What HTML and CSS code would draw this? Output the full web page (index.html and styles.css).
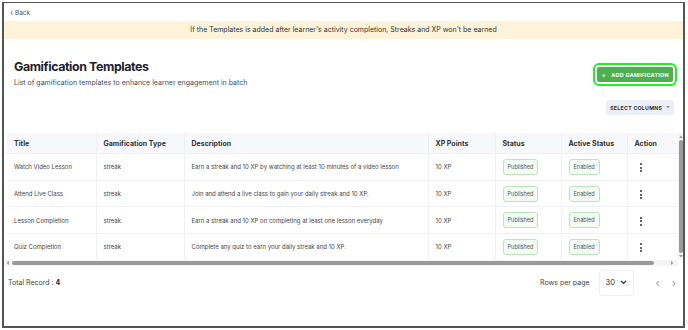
FILE: index.html
```html
<!DOCTYPE html>
<html lang="en">
<head>
  <meta charset="UTF-8">
  <meta name="viewport" content="width=device-width, initial-scale=1.0">
  <title>Gamification Templates</title>
  <link rel="stylesheet" href="styles.css">
</head>
<body>
  <div class="frame">
    <div class="back-bar"><span class="back-arrow">&lsaquo;</span> Back</div>
    <div class="notice">If the Templates is added after learner's activity completion, Streaks and XP won't be earned</div>

    <div class="page-head">
      <div>
        <h1 class="title">Gamification Templates</h1>
        <p class="subtitle">List of gamification templates to enhance learner engagement in batch</p>
      </div>
      <button class="add-btn"><span class="plus">+</span> ADD GAMIFICATION</button>
    </div>

    <div class="toolbar">
      <button class="columns-btn">SELECT COLUMNS
        <svg class="caret" width="4" height="3" viewBox="0 0 4 3"><path d="M0 0 H4 L2 2.5 Z" fill="#999"/></svg>
      </button>
    </div>

    <div class="table-box">
      <div class="table-scroll">
        <table class="grid">
          <colgroup>
            <col style="width:89px">
            <col style="width:88px">
            <col style="width:244px">
            <col style="width:67px">
            <col style="width:66px">
            <col style="width:66px">
            <col style="width:51px">
          </colgroup>
          <thead>
            <tr>
              <th>Title</th>
              <th>Gamification Type</th>
              <th>Description</th>
              <th>XP Points</th>
              <th>Status</th>
              <th>Active Status</th>
              <th>Action</th>
            </tr>
          </thead>
          <tbody>
            <tr>
              <td>Watch Video Lesson</td>
              <td>streak</td>
              <td>Earn a streak and 10 XP by watching at least 10 minutes of a video lesson</td>
              <td>10 XP</td>
              <td><span class="badge">Published</span></td>
              <td><span class="badge">Enabled</span></td>
              <td><span class="kebab"><i></i><i></i><i></i></span></td>
            </tr>
            <tr>
              <td>Attend Live Class</td>
              <td>streak</td>
              <td>Join and attend a live class to gain your daily streak and 10 XP.</td>
              <td>10 XP</td>
              <td><span class="badge">Published</span></td>
              <td><span class="badge">Enabled</span></td>
              <td><span class="kebab"><i></i><i></i><i></i></span></td>
            </tr>
            <tr>
              <td>Lesson Completion</td>
              <td>streak</td>
              <td>Earn a streak and 10 XP on completing at least one lesson everyday</td>
              <td>10 XP</td>
              <td><span class="badge">Published</span></td>
              <td><span class="badge">Enabled</span></td>
              <td><span class="kebab"><i></i><i></i><i></i></span></td>
            </tr>
            <tr>
              <td>Quiz Completion</td>
              <td>streak</td>
              <td>Complete any quiz to earn your daily streak and 10 XP.</td>
              <td>10 XP</td>
              <td><span class="badge">Published</span></td>
              <td><span class="badge">Enabled</span></td>
              <td><span class="kebab"><i></i><i></i><i></i></span></td>
            </tr>
          </tbody>
        </table>
      </div>
      <div class="vscroll">
        <svg class="arrow-svg" width="4" height="3" viewBox="0 0 4 3"><path d="M0 3 H4 L2 0.5 Z" fill="#999"/></svg>
        <span class="vthumb"></span>
        <svg class="arrow-svg" width="4" height="3" viewBox="0 0 4 3"><path d="M0 0 H4 L2 2.5 Z" fill="#999"/></svg>
      </div>
      <div class="hscroll">
        <svg class="arrow-svg" width="3" height="4" viewBox="0 0 3 4"><path d="M3 0 V4 L0.5 2 Z" fill="#999"/></svg>
        <span class="hthumb"></span>
        <svg class="arrow-svg" width="3" height="4" viewBox="0 0 3 4"><path d="M0 0 V4 L2.5 2 Z" fill="#999"/></svg>
      </div>
    </div>

    <div class="footer">
      <div class="total">Total Record : <b>4</b></div>
      <div class="pager">
        <span class="rows-label">Rows per page</span>
        <span class="rows-select">30
          <svg width="7" height="5" viewBox="0 0 7 5"><path d="M1 1 L3.5 3.5 L6 1" fill="none" stroke="#333" stroke-width="1.2"/></svg>
        </span>
        <span class="nav prev">&lsaquo;</span>
        <span class="nav">&rsaquo;</span>
      </div>
    </div>
  </div>
</body>
</html>
```

FILE: styles.css
```css
body {
  margin: 0;
  background: #fff;
  font-family: Inter, "Noto Sans", sans-serif;
  color: #333;
}

.frame {
  box-sizing: border-box;
  width: 683px;
  height: 326px;
  margin: 2px 0 0 2px;
  border: 2px solid #555;
  border-top-width: 1px;
  display: flex;
  flex-direction: column;
}

.back-bar {
  height: 18px;
  line-height: 18px;
  padding-left: 6px;
  font-size: 6.5px;
  color: #555;
}

.back-arrow {
  font-size: 8px;
}

.notice {
  height: 18px;
  line-height: 18px;
  background: #fdf3d9;
  text-align: center;
  font-size: 7px;
  color: #333;
}

.page-head {
  display: flex;
  justify-content: space-between;
  align-items: flex-start;
  padding: 20px 10px 0 10px;
}

.title {
  margin: 0;
  font-size: 12.4px;
  line-height: 16px;
  font-weight: 700;
  letter-spacing: -0.4px;
  color: #1e2230;
}

.subtitle {
  margin: 3px 0 0;
  font-size: 7px;
  line-height: 10px;
  color: #474c5a;
}

.add-btn {
  margin-top: 8px;
  height: 15px;
  width: 76px;
  padding: 0;
  border: none;
  border-radius: 2px;
  background: #4caf50;
  color: #fff;
  font-family: inherit;
  font-size: 5.4px;
  font-weight: 700;
  letter-spacing: 0.3px;
  outline: 2px solid #22ee22;
  outline-offset: 2px;
}

.plus {
  font-size: 8px;
  font-weight: 400;
  margin-right: 3px;
  vertical-align: -1px;
}

.toolbar {
  display: flex;
  justify-content: flex-end;
  padding: 12px 9px 0 0;
}

.columns-btn {
  height: 15px;
  width: 68px;
  padding: 0;
  border: none;
  border-radius: 2px;
  background: #eceff5;
  color: #333;
  font-family: inherit;
  font-size: 5.2px;
  font-weight: 700;
  letter-spacing: 0.3px;
}

.caret {
  margin-left: 2px;
  vertical-align: 1px;
}

.table-box {
  display: grid;
  grid-template-columns: 671px 5px;
  grid-template-rows: auto 6px;
  margin: 18px 0 0 3px;
}

.grid {
  table-layout: fixed;
  width: 671px;
  border-collapse: collapse;
}

.grid th {
  height: 20px;
  padding: 0 7px;
  background: #f6f8fc;
  text-align: left;
  font-size: 7px;
  font-weight: 700;
  color: #333;
  border-left: 1px solid #eef0f5;
}

.grid td {
  height: 25.7px;
  padding: 0 7px;
  font-size: 6px;
  color: #444;
  border-top: 1px solid #eef0f5;
  border-left: 1px solid #eef0f5;
  white-space: nowrap;
}

.grid th:first-child,
.grid td:first-child {
  border-left: none;
}

.badge {
  display: inline-block;
  height: 14px;
  line-height: 14px;
  padding: 0 4px;
  border: 1px solid #b9e5bb;
  border-radius: 3px;
  background: #f3fbf3;
  font-size: 5.6px;
  color: #555;
}

.kebab {
  display: inline-flex;
  flex-direction: column;
  gap: 1.5px;
  margin-left: 5px;
  vertical-align: 2px;
}

.kebab i {
  width: 2px;
  height: 2px;
  border-radius: 50%;
  background: #333;
}

.vscroll {
  display: flex;
  flex-direction: column;
  align-items: center;
  gap: 2px;
  padding: 2px 0;
  background: #f4f4f4;
}

.vthumb {
  flex: 1;
  width: 4px;
  border-radius: 2px;
  background: #9a9a9a;
}

.hscroll {
  display: flex;
  align-items: center;
  background: #f4f4f4;
  margin-left: -3px;
  padding: 0 4px 0 2px;
}

.hthumb {
  width: 642px;
  height: 4px;
  border-radius: 2px;
  background: #9a9a9a;
  margin: 0 auto 0 3px;
}

.footer {
  display: flex;
  justify-content: space-between;
  align-items: center;
  padding: 4px 7px 0 4px;
}

.total {
  font-size: 7px;
  color: #444;
}

.total b {
  color: #1e2230;
}

.pager {
  display: flex;
  align-items: center;
}

.rows-label {
  font-size: 7px;
  color: #444;
  margin-right: 9px;
}

.rows-select {
  box-sizing: border-box;
  display: flex;
  align-items: center;
  justify-content: space-between;
  width: 35px;
  height: 26px;
  padding: 0 6px;
  border: 1px solid #eee;
  border-radius: 3px;
  font-size: 7.5px;
  color: #333;
}

.nav {
  font-size: 11px;
  color: #999;
  margin-left: 12px;
}

.nav.prev {
  margin-left: 22px;
}
```
